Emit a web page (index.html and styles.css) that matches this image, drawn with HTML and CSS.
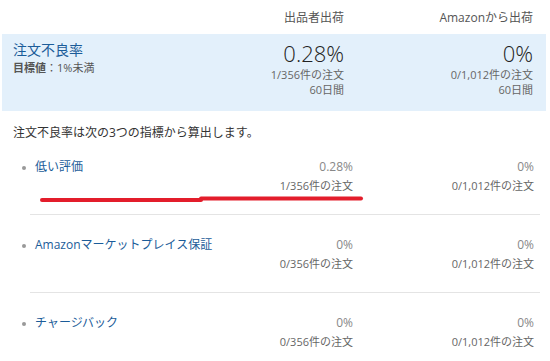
FILE: index.html
```html
<!DOCTYPE html>
<html lang="ja">
<head>
<meta charset="utf-8">
<link rel="stylesheet" href="styles.css">
</head>
<body>
<div class="page">
  <div class="head grid-top">
    <div></div>
    <div class="col">出品者出荷</div>
    <div class="col">Amazonから出荷</div>
  </div>
  <div class="summary grid-top">
    <div class="title-cell">
      <div class="title">注文不良率</div>
      <div class="target"><b>目標値</b>：1%未満</div>
    </div>
    <div class="col">
      <div class="big">0.28%</div>
      <div class="small">1/356件の注文</div>
      <div class="small">60日間</div>
    </div>
    <div class="col">
      <div class="big">0%</div>
      <div class="small">0/1,012件の注文</div>
      <div class="small">60日間</div>
    </div>
  </div>
  <p class="intro">注文不良率は次の3つの指標から算出します。</p>
  <ul class="rows">
    <li class="row">
      <div class="name"><span class="dot"></span>低い評価</div>
      <div class="col"><div class="pct">0.28%</div><div class="cnt">1/356件の注文</div></div>
      <div class="col"><div class="pct">0%</div><div class="cnt">0/1,012件の注文</div></div>
    </li>
    <li class="row">
      <div class="name"><span class="dot"></span>Amazonマーケットプレイス保証</div>
      <div class="col"><div class="pct">0%</div><div class="cnt">0/356件の注文</div></div>
      <div class="col"><div class="pct">0%</div><div class="cnt">0/1,012件の注文</div></div>
    </li>
    <li class="row">
      <div class="name"><span class="dot"></span>チャージバック</div>
      <div class="col"><div class="pct">0%</div><div class="cnt">0/356件の注文</div></div>
      <div class="col"><div class="pct">0%</div><div class="cnt">0/1,012件の注文</div></div>
    </li>
  </ul>
  <svg class="marker" width="330" height="12" viewBox="0 0 330 12">
    <path d="M4 8 L163 8" stroke="#e31d2b" stroke-width="4" stroke-linecap="round" fill="none"/>
    <path d="M163 6.5 L323 6.5" stroke="#e31d2b" stroke-width="4" stroke-linecap="round" fill="none"/>
  </svg>
</div>
</body>
</html>
```

FILE: styles.css
```css
html, body {
  margin: 0;
  padding: 0;
  background: #fff;
}
body {
  font-family: "Open Sans", "Noto Sans CJK JP", sans-serif;
  color: #333;
  width: 550px;
  height: 361px;
  overflow: hidden;
}
.page {
  position: relative;
  width: 550px;
}
.grid-top {
  display: grid;
  grid-template-columns: 1fr 150px 189px;
  margin-left: 2px;
  width: 544px;
  box-sizing: border-box;
  padding-left: 11px;
  padding-right: 13px;
}
.col {
  text-align: right;
  white-space: nowrap;
}
.head {
  padding-top: 9px;
  padding-bottom: 7px;
  font-size: 12px;
  line-height: 18px;
  color: #555;
}
.summary {
  background: #e3f0fb;
  padding-top: 5px;
  padding-bottom: 14px;
}
.title-cell {
  padding-top: 1px;
}
.title {
  font-size: 14px;
  line-height: 20px;
  color: #1b5c99;
}
.target {
  font-size: 11px;
  line-height: 16px;
  color: #555;
}
.target b {
  font-weight: bold;
  color: #555;
}
.big {
  font-size: 22px;
  line-height: 28px;
  font-weight: 300;
  color: #222;
}
.small {
  font-size: 11px;
  line-height: 15px;
  color: #666;
}
.intro {
  margin: 13px 0 0 13px;
  font-size: 12px;
  line-height: 18px;
  color: #333;
}
.rows {
  list-style: none;
  margin: 0 0 0 30px;
  padding: 0;
  width: 510px;
}
.row {
  display: grid;
  grid-template-columns: 1fr 130px 181px;
  padding: 20px 6px 19px 5px;
  border-bottom: 1px solid #e4e4e4;
}
.row:first-child {
  padding-top: 15px;
}
.row:last-child {
  border-bottom: none;
}
.name {
  font-size: 12px;
  line-height: 19px;
  color: #1b5c99;
  white-space: nowrap;
}
.dot {
  display: inline-block;
  width: 4px;
  height: 4px;
  border-radius: 50%;
  background: #999;
  margin-left: -13px;
  margin-right: 9px;
  vertical-align: middle;
}
.pct {
  font-size: 12px;
  line-height: 19px;
  color: #888;
}
.cnt {
  font-size: 11px;
  line-height: 19px;
  color: #666;
}
.marker {
  position: absolute;
  left: 38px;
  top: 192px;
}
```
